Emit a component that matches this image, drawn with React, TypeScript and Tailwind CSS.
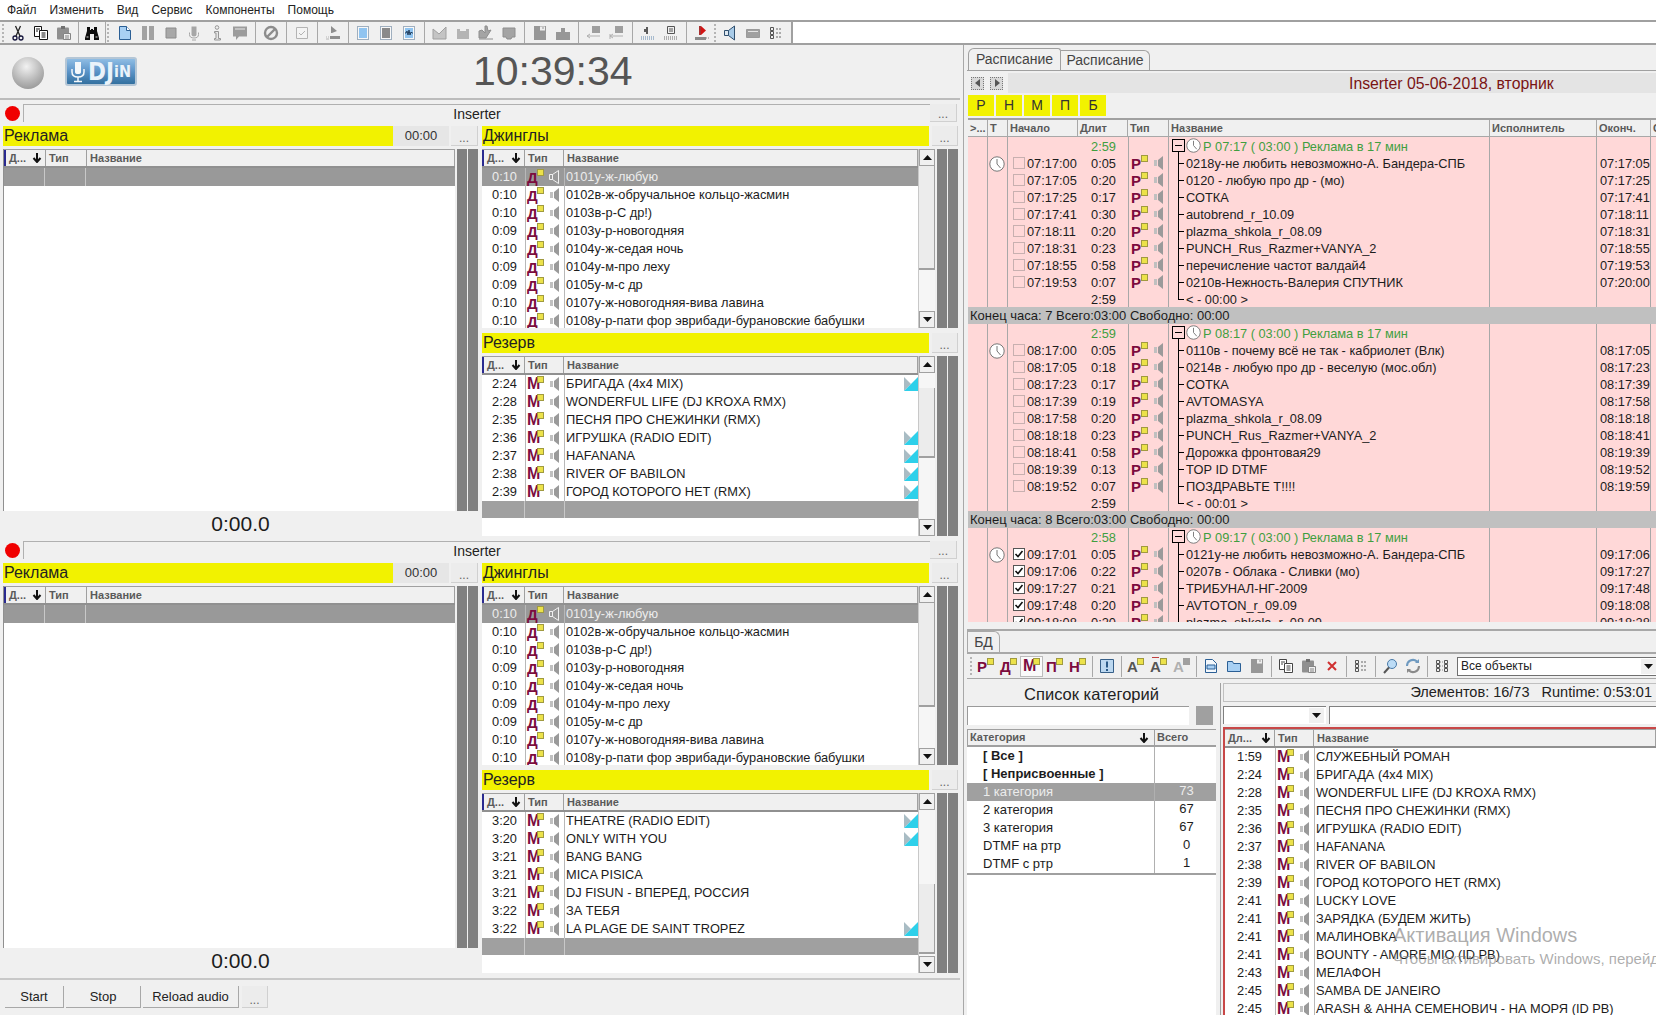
import type { ReactNode } from "react";

type Track = [string, string, boolean?];

const JINGLES: Track[] = [
  ["0:10", "0101у-ж-любую"],
  ["0:10", "0102в-ж-обручальное кольцо-жасмин"],
  ["0:10", "0103в-р-С др!)"],
  ["0:09", "0103у-р-новогодняя"],
  ["0:10", "0104у-ж-седая ночь"],
  ["0:09", "0104у-м-про леху"],
  ["0:09", "0105у-м-с др"],
  ["0:10", "0107у-ж-новогодняя-вива лавина"],
  ["0:10", "0108у-р-пати фор эврибади-бурановские бабушки"],
];

const RESERVE_A: Track[] = [
  ["2:24", "БРИГАДА (4x4 MIX)", true],
  ["2:28", "WONDERFUL LIFE (DJ KROXA RMX)"],
  ["2:35", "ПЕСНЯ ПРО СНЕЖИНКИ (RMX)"],
  ["2:36", "ИГРУШКА (RADIO EDIT)", true],
  ["2:37", "HAFANANA", true],
  ["2:38", "RIVER OF BABILON", true],
  ["2:39", "ГОРОД КОТОРОГО НЕТ (RMX)", true],
];

const RESERVE_B: Track[] = [
  ["3:20", "THEATRE (RADIO EDIT)", true],
  ["3:20", "ONLY WITH YOU", true],
  ["3:21", "BANG BANG"],
  ["3:21", "MICA PISICA"],
  ["3:21", "DJ FISUN - ВПЕРЕД, РОССИЯ"],
  ["3:22", "ЗА ТЕБЯ"],
  ["3:22", "LA PLAGE DE SAINT TROPEZ", true],
];

const DB_TRACKS: Track[] = [
  ["1:59", "СЛУЖЕБНЫЙ РОМАН"],
  ["2:24", "БРИГАДА (4x4 MIX)"],
  ["2:28", "WONDERFUL LIFE (DJ KROXA RMX)"],
  ["2:35", "ПЕСНЯ ПРО СНЕЖИНКИ (RMX)"],
  ["2:36", "ИГРУШКА (RADIO EDIT)"],
  ["2:37", "HAFANANA"],
  ["2:38", "RIVER OF BABILON"],
  ["2:39", "ГОРОД КОТОРОГО НЕТ (RMX)"],
  ["2:41", "LUCKY LOVE"],
  ["2:41", "ЗАРЯДКА (БУДЕМ ЖИТЬ)"],
  ["2:41", "МАЛИНОВКА"],
  ["2:41", "BOUNTY - AMORE MIO (ID PB)"],
  ["2:43", "МЕЛАФОН"],
  ["2:45", "SAMBA DE JANEIRO"],
  ["2:45", "ARASH & АННА СЕМЕНОВИЧ - НА МОРЯ (ID PB)"],
];

const CATEGORIES = [
  { name: "1 категория", total: "73", selected: true },
  { name: "2 категория", total: "67" },
  { name: "3 категория", total: "67" },
  { name: "DTMF на ртр", total: "0" },
  { name: "DTMF с ртр", total: "1" },
];

type Item = [string, string, string, string];

const HOUR_7: Item[] = [
  ["07:17:00", "0:05", "0218у-не любить невозможно-А. Бандера-СПБ", "07:17:05"],
  ["07:17:05", "0:20", "0120 - любую про др -  (мо)", "07:17:25"],
  ["07:17:25", "0:17", "СОТКА", "07:17:41"],
  ["07:17:41", "0:30", "autobrend_r_10.09", "07:18:11"],
  ["07:18:11", "0:20", "plazma_shkola_r_08.09", "07:18:31"],
  ["07:18:31", "0:23", "PUNCH_Rus_Razmer+VANYA_2", "07:18:55"],
  ["07:18:55", "0:58", "перечисление частот валдай4", "07:19:53"],
  ["07:19:53", "0:07", "0210в-Нежность-Валерия СПУТНИК", "07:20:00"],
];

const HOUR_8: Item[] = [
  ["08:17:00", "0:05", "0110в - почему всё не так - кабриолет (Влк)", "08:17:05"],
  ["08:17:05", "0:18", "0214в - любую про др - веселую (мос.обл)", "08:17:23"],
  ["08:17:23", "0:17", "СОТКА", "08:17:39"],
  ["08:17:39", "0:19", "AVTOMASYA", "08:17:58"],
  ["08:17:58", "0:20", "plazma_shkola_r_08.09", "08:18:18"],
  ["08:18:18", "0:23", "PUNCH_Rus_Razmer+VANYA_2", "08:18:41"],
  ["08:18:41", "0:58", "Дорожка фронтовая29", "08:19:39"],
  ["08:19:39", "0:13", "TOP ID DTMF", "08:19:52"],
  ["08:19:52", "0:07", "ПОЗДРАВЬТЕ Т!!!!", "08:19:59"],
];

const HOUR_9: Item[] = [
  ["09:17:01", "0:05", "0121у-не любить невозможно-А. Бандера-СПБ", "09:17:06"],
  ["09:17:06", "0:22", "0207в - Облака - Сливки (мо)", "09:17:27"],
  ["09:17:27", "0:21", "ТРИБУНАЛ-НГ-2009", "09:17:48"],
  ["09:17:48", "0:20", "AVTOTON_r_09.09", "09:18:08"],
  ["09:18:08", "0:20", "plazma_shkola_r_08.09", "09:18:28"],
];

const Ico = ({ children, w = 16 }: { children: ReactNode; w?: number }) => (
  <svg width={w} height={16} viewBox={`0 0 ${w} 16`} className="shrink-0">
    {children}
  </svg>
);

const Cell = ({ children, pressed }: { children?: ReactNode; pressed?: boolean }) => (
  <div
    className={`flex h-[21px] w-[23px] shrink-0 items-center justify-center ${
      pressed ? "border border-[#bcbcbc] bg-[#fafafa]" : ""
    }`}
  >
    {children}
  </div>
);

const Sep = ({ w }: { w: string }) => (
  <div className={`flex h-[21px] shrink-0 justify-center ${w}`}>
    <div className="h-full w-px bg-[#a8a8a8]" />
  </div>
);

const Grip = () => (
  <svg width="3" height="20" viewBox="0 0 3 20" className="shrink-0">
    {[1, 5, 9, 13, 17].map((y) => (
      <rect key={y} x="0" y={y} width="2" height="2" fill="#b5b5b5" />
    ))}
  </svg>
);

const ScissorsIco = () => (
  <Ico>
    <g fill="none" stroke="#14143c" strokeWidth="1.3">
      <circle cx="5" cy="13" r="2" />
      <circle cx="11" cy="13" r="2" />
      <path d="M6 11 10.500 1M10 11 5.500 1" stroke="#222" />
    </g>
  </Ico>
);

const CopyIco = ({ color = "#111" }: { color?: string }) => (
  <Ico>
    <g fill="#fff" stroke={color} strokeWidth="1">
      <path d="M1.500 1.500h7v10h-7z" />
      <path d="M6.500 5.500h8v9h-8z" />
      <path d="M3 4h4M3 6h2M8.500 8h4M8.500 10h4M8.500 12h4" fill="none" />
    </g>
  </Ico>
);

const PasteIco = () => (
  <Ico>
    <path d="M2 2.500h10q1 0 1 1v11H2q-1 0-1-1v-10q0-1 1-1z" fill="#8f8f8f" />
    <path d="M5 1h4v3H5z" fill="#707070" />
    <path d="M7.500 8.500h7v6h-7z" fill="#efefef" stroke="#858585" />
    <path d="M9 11h4M9 13h4" stroke="#858585" />
  </Ico>
);

const BinocIco = () => (
  <Ico>
    <path d="M3 2h3v3h1v-1h2v1h1V2h3v4l2 7v2H10V9H6v6H1v-2l2-7z" fill="#0c0c0c" />
    <path d="M2.500 12h2M11.500 12h2" stroke="#d8d8d8" />
  </Ico>
);

const DocIco = ({ fill = "#a8d0f4" }: { fill?: string }) => (
  <Ico>
    <path d="M2.500 1.500h7l4 4v9h-11z" fill={fill} stroke="#2b5f95" />
    <path d="M9.500 1.500v4h4" fill="#fff" stroke="#2b5f95" />
  </Ico>
);

const PauseIco = () => (
  <Ico>
    <path d="M2 1h5v14H2zM9 1h5v14H9z" fill="#a2a2a2" />
  </Ico>
);

const StopIco = () => (
  <Ico>
    <path d="M3 3h10v10H3z" fill="#a8a8a8" stroke="#8c8c8c" />
  </Ico>
);

const MicIco = () => (
  <Ico>
    <path d="M5.500 1.500h5v8q0 2-2.500 2t-2.500-2z" fill="#a6a6a6" />
    <path d="M3.500 7.500v2q0 3.500 4.500 3.500t4.500-3.500v-2M6 15h4" fill="none" stroke="#a6a6a6" />
  </Ico>
);

const InfoIco = () => (
  <Ico>
    <circle cx="8" cy="2.500" r="1.800" fill="none" stroke="#969696" />
    <path d="M5.500 6.500h4v7h2v1.500h-6v-1.500h1.500v-5.500h-1.500z" fill="#e6e6e6" stroke="#969696" />
  </Ico>
);

const CommentIco = () => (
  <Ico>
    <path d="M1 1.500h14v10H7l-3 3.500v-3.500H1z" fill="#9c9c9c" />
    <path d="M3 3.500h10v1H3z" fill="#e8e8e8" />
  </Ico>
);

const NoIco = () => (
  <Ico>
    <circle cx="8" cy="8" r="6" fill="none" stroke="#8c8c8c" strokeWidth="2.400" />
    <path d="M4 12 12 4" stroke="#8c8c8c" strokeWidth="2.400" />
  </Ico>
);

const CheckIco = () => (
  <Ico>
    <path d="M2.500 2.500h11v11h-11z" fill="#f4f4f4" stroke="#b4b4b4" />
    <path d="M5 8l2 2 4-4" fill="none" stroke="#b4b4b4" />
  </Ico>
);

const FlagIco = () => (
  <Ico>
    <path d="M6 1l6 5-5 2H6z" fill="#8e8e8e" />
    <path d="M5 11h10v3H5z" fill="#8e8e8e" />
    <path d="M1 12h1M3 12h1M1 14h3" stroke="#b4b4b4" />
  </Ico>
);

const DottedIco = ({ fill, wave }: { fill: string; wave?: boolean }) => (
  <Ico>
    <path d="M2.500 1.500h11v13h-11z" fill="#f8f8f8" stroke="#4a6a8a" strokeDasharray="1 1" />
    <path d="M4 3h8v10H4z" fill={fill} />
    {wave && <path d="M4 8h1l1-2 1 4 1-5 1 5 1-3 1 1h1" fill="none" stroke="#23405f" />}
  </Ico>
);

const EnvIco = ({ v }: { v: number }) => (
  <Ico>
    {v === 0 && <path d="M1 4l6 5 7-7v12H1z" fill="#c4c4c4" stroke="#a0a0a0" />}
    {v === 1 && <path d="M2 4h3v2h6V4h3v10H2z" fill="#b4b4b4" />}
    {v === 2 && <path d="M1 6l3-1 3 3V1h2l1 5 3-1-5 8H1zM1 14h14" fill="#a4a4a4" stroke="#8e8e8e" />}
    {v === 3 && <path d="M2 3h12v9h-3l-1 2H6l-1-2H2z" fill="#a4a4a4" stroke="#8e8e8e" />}
  </Ico>
);

const FileGrayIco = () => (
  <Ico>
    <path d="M2 1h12v14H2z" fill="#979797" />
    <path d="M8 1.500h5v4H8z" fill="#eee" />
    <path d="M10 3h2" stroke="#979797" />
  </Ico>
);

const LockIco = () => (
  <Ico>
    <path d="M1 7h5V3h4v4h5v8H1z" fill="#979797" />
  </Ico>
);

const MoveIco = ({ bar }: { bar?: boolean }) => (
  <Ico>
    <path d="M6 1h8v7H6z" fill="#9e9e9e" />
    <path d="M1 11h13M1 11l3-2M1 11l3 2" fill="none" stroke="#b0b0b0" />
    {bar && <path d="M1 9v5" stroke="#b0b0b0" />}
  </Ico>
);

const SmallSpeakerIco = () => (
  <Ico>
    <path d="M6 2h2v7H6zM4 4h2v3H4z" fill="#5a5a5a" />
    <path d="M1 12h14M1 14h14" stroke="#5f86ad" strokeDasharray="1 1" />
  </Ico>
);

const SmallBoxIco = () => (
  <Ico>
    <path d="M4.500 1.500h7v7h-7z" fill="#f0f0f0" stroke="#555" />
    <path d="M6 4h4M6 6h4" stroke="#555" />
    <path d="M1 12h14M1 14h14" stroke="#6a6a6a" strokeDasharray="1 1" />
  </Ico>
);

const RedIco = () => (
  <Ico>
    <path d="M5 1h2v9H5z" fill="#a83030" />
    <path d="M7 1l5 4.500L7 10z" fill="#d21414" />
    <path d="M1 12h11v3H1z" fill="#8a8a8a" />
    <path d="M12 13h3" stroke="#8a8a8a" strokeDasharray="1 1" />
  </Ico>
);

const BlueSpeakerIco = () => (
  <Ico>
    <path d="M2.500 5.500h4v5h-4z" fill="#dfe8f0" stroke="#31506f" />
    <path d="M6.500 5.500l6-4.500v14l-6-4.500z" fill="#a8cbe8" stroke="#31506f" />
  </Ico>
);

const RectIco = () => (
  <Ico>
    <path d="M1.500 4.500h13v8h-13z" fill="#a0a0a0" stroke="#9a9a9a" />
    <path d="M3 6h10v1H3z" fill="#e4e4e4" />
  </Ico>
);

const ListIco = () => (
  <Ico>
    <path d="M2.500 2.500h3v3h-3zM2.500 6.500h3v3h-3zM2.500 10.500h3v3h-3z" fill="none" stroke="#555" />
    <path d="M8 4h6M8 8h6M8 12h6" stroke="#666" strokeDasharray="2 1" />
  </Ico>
);

const DotsGridIco = () => (
  <Ico>
    <path
      d="M2.500 2.500h3v3h-3zM10.500 2.500h3v3h-3zM2.500 6.500h3v3h-3zM10.500 6.500h3v3h-3zM2.500 10.500h3v3h-3zM10.500 10.500h3v3h-3z"
      fill="none"
      stroke="#555"
    />
    <path d="M6 4h4M6 8h4M6 12h4" stroke="#888" strokeDasharray="1 1" />
  </Ico>
);

const InfoBoxIco = () => (
  <Ico>
    <path d="M1.500 1.500h13v13h-13z" fill="#bcd8f0" stroke="#365f88" />
    <path d="M7 3.500h2v6H7zM7 11h2v2H7z" fill="#2a5a88" />
  </Ico>
);

const FormIco = () => (
  <Ico>
    <path d="M2.500 1.500h7l4 4v9h-11z" fill="#f4f8fc" stroke="#2b5f95" />
    <path d="M4 7h8v4H4z" fill="#a8d0f4" stroke="#2b5f95" />
  </Ico>
);

const FolderIco = () => (
  <Ico>
    <path d="M1.500 3.500h5l1 2h7v8h-13z" fill="#a8d0f4" stroke="#2b5f95" />
  </Ico>
);

const CrossIco = () => (
  <Ico>
    <path d="M4 4l8 8M12 4l-8 8" stroke="#d03030" strokeWidth="2" />
  </Ico>
);

const SearchIco = () => (
  <Ico>
    <circle cx="10" cy="6" r="4.500" fill="#bcdcf6" stroke="#4a7aa8" />
    <path d="M7 9.500 2 15" stroke="#555" strokeWidth="2" />
  </Ico>
);

const RefreshIco = () => (
  <Ico>
    <path d="M3 8a5 5 0 0 1 8-4l-1 1h4V1l-1.500 1.500A7 7 0 0 0 1 8z" fill="#6f9ac0" />
    <path d="M13 8a5 5 0 0 1-8 4l1-1H2v4l1.500-1.500A7 7 0 0 0 15 8z" fill="#8a8a8a" />
  </Ico>
);

const ClockIco = ({ size = 16 }: { size?: number }) => (
  <svg width={size} height={size} viewBox="0 0 16 16" className="shrink-0">
    <circle cx="8" cy="8" r="7.200" fill="#fff" stroke="#777" />
    <path d="M8 3v5l3.500 4" fill="none" stroke="#777" />
  </svg>
);

const SpeakerIco = ({ hollow }: { hollow?: boolean }) => (
  <svg width="12" height="14" viewBox="0 0 12 14" className="shrink-0">
    {hollow ? (
      <path d="M.5 4.500h3v5h-3zM3.500 4.500l6-4v13l-6-4z" fill="none" stroke="#f0f0f0" />
    ) : (
      <>
        <path d="M1 4h3v6H1z" fill="#c0c0c0" />
        <path d="M5 4l5-4v14l-5-4z" fill="#9a9a9a" />
      </>
    )}
  </svg>
);

const TypeMark = ({ letter, big }: { letter: string; big?: boolean }) => (
  <span className="relative inline-block h-[16px] w-[17px] shrink-0">
    <span
      className={`absolute bottom-0 left-0 font-bold leading-none text-[#7c0c3e] ${
        big ? "text-[16px]" : "text-[15px]"
      }`}
    >
      {letter}
    </span>
    <span className="absolute right-0 top-0 size-[7px] border border-[#a09a40] bg-[#ece24a]" />
  </span>
);

const Marker = () => (
  <svg width="14" height="14" viewBox="0 0 14 14" className="shrink-0">
    <path d="M0 0 7 7 0 14z" fill="#a9bcc4" />
    <path d="M14 0v14H0z" fill="#2ed0ea" />
  </svg>
);

const SortArrow = () => (
  <svg width="10" height="10" viewBox="0 0 10 10" className="shrink-0">
    <path d="M5 0v8M1.500 5 5 9l3.500-4" fill="none" stroke="#111" strokeWidth="2" />
  </svg>
);

const More = ({ className }: { className: string }) => (
  <div
    className={`flex shrink-0 items-end justify-center border-b border-r border-[#d0d0d0] bg-[#ececec] pb-px text-[12px] leading-[12px] text-[#666] ${className}`}
  >
    ...
  </div>
);

const HeadCell = ({ w, children, first }: { w: string; children?: ReactNode; first?: boolean }) => (
  <div
    className={`flex h-full shrink-0 items-center justify-between overflow-hidden border-r border-[#a0a0a0] pl-[3px] pr-[3px] text-[11px] font-bold text-[#5a5a5a] ${w} ${
      first ? "border-l-2 border-l-[#2a2a90]" : ""
    }`}
  >
    {children}
  </div>
);

const ListHeader = ({ c1, c2, label = "Д..." }: { c1: string; c2: string; label?: string }) => (
  <div className="flex h-[19px] shrink-0 border-b-2 border-t border-b-[#909090] border-t-[#a0a0a0] bg-[#f0f0f0]">
    <HeadCell w={c1} first={label === "Д..."}>
      {label}
      <SortArrow />
    </HeadCell>
    <HeadCell w={c2}>Тип</HeadCell>
    <HeadCell w="flex-1">Название</HeadCell>
  </div>
);

const TrackRow = ({
  track,
  selected,
  letter,
  c1,
  c2,
}: {
  track: Track;
  selected?: boolean;
  letter: string;
  c1: string;
  c2: string;
}) => (
  <div
    className={`flex h-[18px] shrink-0 items-center text-[12.800px] ${
      selected ? "bg-[#999999] text-[#ececec]" : "text-[#1c1c1c]"
    }`}
  >
    <div className={`h-full shrink-0 text-right leading-[18px] ${c1}`}>{track[0]}</div>
    <div className={`flex h-full shrink-0 items-center gap-[5px] border-l border-r border-[#b8b8b8] pl-[1px] ${c2}`}>
      <TypeMark letter={letter} big={letter === "М"} />
      <SpeakerIco hollow={selected} />
    </div>
    <div className="flex h-full min-w-0 flex-1 items-center justify-between pl-[1px]">
      <span className="whitespace-nowrap">{track[1]}</span>
      {track[2] && <Marker />}
    </div>
  </div>
);

const Scrollbar = ({ top, height }: { top: number; height: number }) => (
  <div className="flex h-full w-[17px] shrink-0 flex-col border-l border-[#c8c8c8] bg-[#f6f6f6]">
    <div className="flex h-[17px] shrink-0 items-center justify-center border border-[#a0a0a0] bg-[#f0f0f0]">
      <svg width="9" height="5" viewBox="0 0 9 5">
        <path d="M4.500 0 9 5H0z" fill="#111" />
      </svg>
    </div>
    <div className="min-h-0 flex-1">
      <div style={{ height: top }} />
      <div className="border-b-2 border-r border-[#a0a0a0] bg-[#ececec]" style={{ height }} />
    </div>
    <div className="flex h-[17px] shrink-0 items-center justify-center border border-[#a0a0a0] bg-[#f0f0f0]">
      <svg width="9" height="5" viewBox="0 0 9 5">
        <path d="M4.500 5 9 0H0z" fill="#111" />
      </svg>
    </div>
  </div>
);

const Strips = () => (
  <div className="flex h-full shrink-0 gap-px">
    <div className="h-full w-[10px] bg-[#808080]" />
    <div className="h-full w-[10px] bg-[#808080]" />
  </div>
);

const YellowBar = ({ children, className }: { children: ReactNode; className: string }) => (
  <div className={`h-[20px] bg-[#f2f200] pl-px text-[16px] leading-[20px] text-[#222] ${className}`}>
    {children}
  </div>
);

const TrackList = ({
  tracks,
  letter,
  filler,
  top,
  height,
  selected,
  className,
}: {
  tracks: Track[];
  letter: string;
  filler?: boolean;
  top: number;
  height: number;
  selected?: boolean;
  className: string;
}) => (
  <div className={`flex w-full shrink-0 ${className}`}>
    <div className="flex w-[436px] min-w-0 shrink-0 flex-col overflow-hidden bg-white">
      <ListHeader c1="w-[43px]" c2="w-[39px]" />
      {tracks.map((t, i) => (
        <TrackRow
          key={i}
          track={t}
          letter={letter}
          selected={selected && i === 0}
          c1="w-[43px] pr-[8px]"
          c2="w-[40px]"
        />
      ))}
      {filler && (
        <div className="flex h-[17px] shrink-0 bg-[#a0a0a0]">
          <div className="h-full w-[43px] border-r border-[#c8c8c8]" />
          <div className="h-full w-[40px] border-r border-[#c8c8c8]" />
        </div>
      )}
    </div>
    <Scrollbar top={top} height={height} />
    <div className="w-[2px] shrink-0" />
    <Strips />
  </div>
);

const InserterPanel = ({ reserve, reserveTop }: { reserve: Track[]; reserveTop: number }) => (
  <div className="flex h-[437px] shrink-0 flex-col">
    <div className="flex h-[18px] shrink-0 items-center">
      <div className="ml-[5px] size-[15px] shrink-0 rounded-full bg-[#f00000]" />
      <div className="ml-[3px] flex h-full w-[907px] shrink-0 items-center justify-center border-l border-t border-[#b0b0b0] pt-[2px] text-[14px] text-[#222]">
        Inserter
      </div>
      <More className="h-full w-[27px]" />
    </div>
    <div className="mt-[4px] flex min-h-0 flex-1">
      <div className="ml-[3px] flex w-[475px] shrink-0 flex-col">
        <div className="flex h-[20px] shrink-0">
          <YellowBar className="w-[390px] shrink-0">Реклама</YellowBar>
          <div className="flex h-full w-[56px] shrink-0 items-center justify-center bg-[#e6e6e6] text-[13px] text-[#333]">
            00:00
          </div>
          <More className="ml-[2px] h-full w-[27px]" />
        </div>
        <div className="mt-[3px] flex h-[362px] shrink-0">
          <div className="flex w-[452px] shrink-0 flex-col border-l border-[#909090] bg-white">
            <ListHeader c1="w-[42px]" c2="w-[41px]" />
            <div className="flex h-[18px] shrink-0 bg-[#999999]">
              <div className="h-full w-[41px] border-r border-[#c8c8c8]" />
              <div className="h-full w-[41px] border-r border-[#c8c8c8]" />
            </div>
          </div>
          <div className="w-[2px] shrink-0" />
          <Strips />
        </div>
        <div className="flex h-[26px] shrink-0 items-center justify-center text-[21px] text-[#1c1c1c]">0:00.0</div>
      </div>
      <div className="ml-[4px] flex w-[476px] shrink-0 flex-col">
        <div className="flex h-[20px] shrink-0">
          <YellowBar className="w-[447px] shrink-0">Джинглы</YellowBar>
          <More className="ml-[3px] h-full w-[26px]" />
        </div>
        <TrackList tracks={JINGLES} letter="Д" selected top={0} height={104} className="mt-[3px] h-[179px]" />
        <div className="mt-[5px] flex h-[20px] shrink-0">
          <YellowBar className="w-[447px] shrink-0">Резерв</YellowBar>
          <More className="ml-[3px] h-full w-[26px]" />
        </div>
        <TrackList tracks={reserve} letter="М" filler top={reserveTop} height={70} className="mt-[3px] h-[180px]" />
      </div>
    </div>
  </div>
);

const Logo = () => (
  <div className="ml-[21px] flex h-[29px] w-[72px] shrink-0 items-center rounded-[3px] border-2 border-[#b4c6d6] bg-[linear-gradient(#8fbde4,#5c94c8_50%,#33709f)] pl-[4px]">
    <svg width="14" height="22" viewBox="0 0 14 22" className="shrink-0">
      <path d="M4 1h6v10q0 2-3 2t-3-2z" fill="#f4f8fb" />
      <path d="M1 8v3q0 5 6 5t6-5V8M7 16v4M3 20.500h8" fill="none" stroke="#f4f8fb" strokeWidth="1.500" />
    </svg>
    <span className="ml-[3px] font-['DejaVu_Sans_Condensed','Liberation_Sans',sans-serif] text-[24px] font-bold leading-none text-[#eaf3fa]">
      DJ
    </span>
    <span className="font-['DejaVu_Sans_Condensed','Liberation_Sans',sans-serif] text-[16px] font-bold leading-none text-[#eaf3fa]">
      iN
    </span>
  </div>
);

const TopToolbar = () => (
  <div className="flex h-full w-[793px] shrink-0 items-center border-r-2 border-[#a0a0a0] bg-[#f0f0f0] pl-[2px]">
    <Grip />
    <div className="w-[1.500px] shrink-0" />
    <Cell><ScissorsIco /></Cell>
    <Cell><CopyIco /></Cell>
    <Cell><PasteIco /></Cell>
    <Sep w="w-[5px]" />
    <Cell><BinocIco /></Cell>
    <Sep w="w-[3px]" />
    <Grip />
    <div className="w-[4px] shrink-0" />
    <Cell><DocIco /></Cell>
    <Cell><PauseIco /></Cell>
    <Cell><StopIco /></Cell>
    <Cell><MicIco /></Cell>
    <Cell><InfoIco /></Cell>
    <Cell><CommentIco /></Cell>
    <Sep w="w-[8px]" />
    <Cell><NoIco /></Cell>
    <Sep w="w-[8px]" />
    <Cell><CheckIco /></Cell>
    <Sep w="w-[8px]" />
    <Cell><FlagIco /></Cell>
    <Sep w="w-[7px]" />
    <Cell><DottedIco fill="#90c4f0" /></Cell>
    <Cell><DottedIco fill="#8a8a8a" /></Cell>
    <Cell><DottedIco fill="#90c4f0" wave /></Cell>
    <Sep w="w-[8px]" />
    <Cell><EnvIco v={0} /></Cell>
    <Cell><EnvIco v={1} /></Cell>
    <Cell><EnvIco v={2} /></Cell>
    <Cell><EnvIco v={3} /></Cell>
    <Sep w="w-[8px]" />
    <Cell><FileGrayIco /></Cell>
    <Cell><LockIco /></Cell>
    <Sep w="w-[8px]" />
    <Cell><MoveIco /></Cell>
    <Cell><MoveIco bar /></Cell>
    <Sep w="w-[8px]" />
    <Cell><SmallSpeakerIco /></Cell>
    <Cell><SmallBoxIco /></Cell>
    <Sep w="w-[8px]" />
    <Cell><RedIco /></Cell>
    <Grip />
    <div className="w-[2px] shrink-0" />
    <Cell><BlueSpeakerIco /></Cell>
    <Cell><RectIco /></Cell>
    <Cell><ListIco /></Cell>
  </div>
);

const SCHED = {
  c0: "w-[20px]",
  c1: "w-[20px]",
  c2: "w-[70px]",
  c3: "w-[50px]",
  c4: "w-[41px]",
  c5: "w-[321px]",
  c6: "w-[107px]",
  c7: "w-[54px]",
};

const SchedHead = ({ w, children }: { w: string; children?: ReactNode }) => (
  <div className={`flex h-full shrink-0 items-center overflow-hidden border-r border-[#a8a8a8] pl-[2px] text-[11px] font-bold text-[#5a5a5a] ${w}`}>
    {children}
  </div>
);

const SchedRow = ({
  showClock,
  time,
  checked,
  dur,
  durGreen,
  letter,
  name,
  end,
}: {
  showClock?: boolean;
  time?: string;
  checked?: boolean;
  dur: string;
  durGreen?: boolean;
  letter?: boolean;
  name: ReactNode;
  end?: string;
}) => (
  <div className="flex h-[17px] shrink-0 text-[12.800px] leading-[19px] text-[#1c1c1c]">
    <div className={`h-full shrink-0 border-r border-[#a8a8a8] ${SCHED.c0}`} />
    <div className={`flex h-full shrink-0 items-start justify-center border-r border-[#a8a8a8] pr-px pt-[2px] ${SCHED.c1}`}>
      {showClock && <ClockIco />}
    </div>
    <div className={`flex h-full shrink-0 items-center pl-[5px] pt-px ${SCHED.c2}`}>
      {time && (
        <>
          {checked ? (
            <span className="flex size-[12px] shrink-0 items-center justify-center border border-[#555] bg-white">
              <svg width="10" height="10" viewBox="0 0 10 10">
                <path d="M1.500 5 4 7.500 8.500 2" fill="none" stroke="#111" strokeWidth="1.600" />
              </svg>
            </span>
          ) : (
            <span className="size-[12px] shrink-0 border border-[#c8b0b0] bg-[#ffd8d8]" />
          )}
          <span className="ml-[2px]">{time}</span>
        </>
      )}
    </div>
    <div className={`h-full shrink-0 pr-[12px] text-right ${durGreen ? "text-[#3f9f3f]" : ""} ${SCHED.c3}`}>{dur}</div>
    <div className={`flex h-full shrink-0 items-center gap-[5px] border-l border-r border-[#a8a8a8] pl-[2px] ${SCHED.c4}`}>
      {letter && (
        <>
          <TypeMark letter="Р" />
          <SpeakerIco />
        </>
      )}
    </div>
    <div className={`relative h-full shrink-0 overflow-hidden whitespace-nowrap border-r border-[#a8a8a8] ${SCHED.c5}`}>
      {name}
    </div>
    <div className={`h-full shrink-0 border-r border-[#a8a8a8] ${SCHED.c6}`} />
    <div className={`h-full shrink-0 border-r border-[#a8a8a8] pl-[3px] ${SCHED.c7}`}>{end}</div>
  </div>
);

const TreeName = ({ text, last }: { text: string; last?: boolean }) => (
  <div className="pl-[17px]">
    <span className={`absolute left-[9px] top-0 w-px bg-black ${last ? "h-1/2" : "h-full"}`} />
    <span className="absolute left-[9px] top-1/2 h-px w-[6px] bg-black" />
    {text}
  </div>
);

const GroupTitle = ({ text }: { text: string }) => (
  <div className="flex h-full items-center pl-[3px] text-[#3f9f3f]">
    <span className="relative z-10 flex size-[13px] shrink-0 items-center justify-center border border-black">
      <span className="h-px w-[7px] bg-black" />
    </span>
    <span className="absolute left-[9px] top-[15px] h-[2px] w-px bg-black" />
    <span className="ml-[1px]">
      <ClockIco size={15} />
    </span>
    <span className="ml-[2px] pt-px">{text}</span>
  </div>
);

const ScheduleGroup = ({
  title,
  head,
  tail,
  tailName,
  items,
  checked,
}: {
  title: string;
  head: string;
  tail?: string;
  tailName?: string;
  items: Item[];
  checked?: boolean;
}) => (
  <div className="flex shrink-0 flex-col bg-[#ffd8d8]">
    <SchedRow dur={head} durGreen name={<GroupTitle text={title} />} />
    {items.map((it, i) => (
      <SchedRow
        key={it[0]}
        showClock={i === 0}
        time={it[0]}
        checked={checked}
        dur={it[1]}
        letter
        name={<TreeName text={it[2]} />}
        end={it[3]}
      />
    ))}
    {tail && <SchedRow dur={tail} name={<TreeName text={tailName ?? ""} last />} />}
  </div>
);

const HourEnd = ({ hour }: { hour: number }) => (
  <div className="flex h-[17px] shrink-0 items-center bg-[#c0c0c0] pl-[2px] text-[13px] text-[#1c1c1c]">
    Конец часа: {hour} Всего:03:00 Свободно: 00:00
  </div>
);

const Schedule = () => (
  <div className="flex h-[504px] w-[688px] shrink-0 flex-col overflow-hidden border-t-2 border-[#a0a0a0]">
    <div className="flex h-[17px] shrink-0 border-b border-[#a8a8a8]">
      <SchedHead w={SCHED.c0}>{">..."}</SchedHead>
      <SchedHead w={SCHED.c1}>Т</SchedHead>
      <SchedHead w={SCHED.c2}>Начало</SchedHead>
      <SchedHead w={SCHED.c3}>Длит</SchedHead>
      <SchedHead w={SCHED.c4}>Тип</SchedHead>
      <SchedHead w={SCHED.c5}>Название</SchedHead>
      <SchedHead w={SCHED.c6}>Исполнитель</SchedHead>
      <SchedHead w={SCHED.c7}>Оконч.</SchedHead>
      <SchedHead w="w-[20px]">С</SchedHead>
    </div>
    <ScheduleGroup title="Р 07:17 ( 03:00 ) Реклама в 17 мин" head="2:59" tail="2:59" tailName="< - 00:00 >" items={HOUR_7} />
    <HourEnd hour={7} />
    <ScheduleGroup title="Р 08:17 ( 03:00 ) Реклама в 17 мин" head="2:59" tail="2:59" tailName="< - 00:01 >" items={HOUR_8} />
    <HourEnd hour={8} />
    <ScheduleGroup title="Р 09:17 ( 03:00 ) Реклама в 17 мин" head="2:58" items={HOUR_9} checked />
  </div>
);

const DbToolbar = () => (
  <div className="flex h-[24px] shrink-0 items-center pl-[3px]">
    <Grip />
    <div className="w-[1px] shrink-0" />
    <Cell><TypeMark letter="Р" /></Cell>
    <Cell><TypeMark letter="Д" /></Cell>
    <Cell pressed><TypeMark letter="М" big /></Cell>
    <Cell><TypeMark letter="П" /></Cell>
    <Cell><TypeMark letter="Н" /></Cell>
    <Sep w="w-[6px]" />
    <Cell><InfoBoxIco /></Cell>
    <Sep w="w-[6px]" />
    <Cell>
      <span className="relative inline-block h-[16px] w-[17px]">
        <span className="absolute bottom-0 left-0 text-[15px] font-bold leading-none text-[#555]">А</span>
        <span className="absolute right-0 top-0 size-[7px] border border-[#a09a40] bg-[#ece24a]" />
      </span>
    </Cell>
    <Cell>
      <span className="relative inline-block h-[16px] w-[17px]">
        <span className="absolute bottom-0 left-0 text-[15px] font-bold leading-none text-[#555]">А</span>
        <span className="absolute left-[2px] top-[-1px] h-[3px] w-[7px] border-t border-[#c04040]" />
        <span className="absolute right-0 top-0 size-[7px] border border-[#a09a40] bg-[#ece24a]" />
      </span>
    </Cell>
    <Cell>
      <span className="relative inline-block h-[16px] w-[17px]">
        <span className="absolute bottom-0 left-0 text-[15px] font-bold leading-none text-[#b0b0b0]">А</span>
        <span className="absolute right-0 top-0 size-[7px] bg-[#a0a0a0]" />
      </span>
    </Cell>
    <Sep w="w-[6px]" />
    <Cell><FormIco /></Cell>
    <Cell><FolderIco /></Cell>
    <Cell><FileGrayIco /></Cell>
    <Sep w="w-[6px]" />
    <Cell><CopyIco color="#444" /></Cell>
    <Cell><PasteIco /></Cell>
    <Cell><CrossIco /></Cell>
    <Sep w="w-[6px]" />
    <Cell><ListIco /></Cell>
    <Sep w="w-[6px]" />
    <Cell><SearchIco /></Cell>
    <Cell><RefreshIco /></Cell>
    <Sep w="w-[6px]" />
    <Cell><DotsGridIco /></Cell>
    <div className="ml-[4px] flex h-[19px] w-[201px] shrink-0 items-center justify-between border border-[#707070] bg-white pl-[3px] pr-[1px] text-[12px] text-[#222]">
      Все объекты
      <span className="flex h-[15px] w-[15px] items-center justify-center bg-[#f0f0f0]">
        <svg width="9" height="5" viewBox="0 0 9 5">
          <path d="M4.500 5 9 0H0z" fill="#111" />
        </svg>
      </span>
    </div>
  </div>
);

const Categories = () => (
  <div className="flex w-[249px] shrink-0 flex-col">
    <div className="flex h-[23px] shrink-0 items-center justify-center text-[16.500px] text-[#222]">Список категорий</div>
    <div className="flex h-[19px] shrink-0 items-stretch">
      <div className="w-[222px] shrink-0 border-l border-t border-[#9a9a9a] bg-white" />
      <div className="ml-[7px] w-[17px] shrink-0 bg-[#a0a0a0]" />
    </div>
    <div className="mt-[4px] flex h-[18px] shrink-0 border-b-2 border-t border-[#a0a0a0]">
      <div className="flex w-[188px] shrink-0 items-center justify-between border-l border-r border-[#a0a0a0] pl-[2px] pr-[5px] text-[11px] font-bold text-[#5a5a5a]">
        Категория
        <SortArrow />
      </div>
      <div className="flex flex-1 items-center pl-[2px] text-[11px] font-bold text-[#5a5a5a]">Всего</div>
    </div>
    <div className="flex flex-col bg-white text-[13px] text-[#1c1c1c]">
      <div className="flex h-[18px]">
        <div className="w-[188px] shrink-0 border-r border-[#b0b0b0] pl-[16px] font-bold leading-[18px]">[ Все ]</div>
      </div>
      <div className="flex h-[18px]">
        <div className="w-[188px] shrink-0 border-r border-[#b0b0b0] pl-[16px] font-bold leading-[18px]">[ Неприсвоенные ]</div>
      </div>
      {CATEGORIES.map((c) => (
        <div key={c.name} className={`flex h-[18px] ${c.selected ? "bg-[#a0a0a0] text-[#ececec]" : ""}`}>
          <div className="w-[188px] shrink-0 border-r border-[#b0b0b0] pl-[16px] leading-[18px]">{c.name}</div>
          <div className="flex-1 pl-[2px] text-center leading-[16px]">{c.total}</div>
        </div>
      ))}
    </div>
    <div className="h-[2px] shrink-0 bg-[#a0a0a0]" />
    <div className="flex-1 bg-white" />
  </div>
);

const DbList = () => (
  <div className="flex min-w-0 flex-1 flex-col">
    <div className="flex h-[19px] shrink-0 items-center justify-end whitespace-pre border-b border-l border-t border-[#c0c0c0] pr-[4px] text-[14.500px] text-[#222]">
      {"Элементов: 16/73   Runtime: 0:53:01"}
    </div>
    <div className="mt-[4px] flex h-[18px] shrink-0">
      <div className="flex w-[103px] shrink-0 items-center justify-end border-l border-t border-[#808080] bg-white pr-[2px]">
        <span className="flex h-[15px] w-[15px] items-center justify-center bg-[#f0f0f0]">
          <svg width="9" height="5" viewBox="0 0 9 5">
            <path d="M4.500 5 9 0H0z" fill="#111" />
          </svg>
        </span>
      </div>
      <div className="ml-[3px] flex-1 border-l border-t border-[#808080] bg-white" />
    </div>
    <div className="mt-[3px] flex min-h-0 flex-1 flex-col overflow-hidden border-l-2 border-t-2 border-[#c84848] bg-white">
      <ListHeader c1="w-[50px]" c2="w-[39px]" label="Дл..." />
      {DB_TRACKS.map((t, i) => (
        <TrackRow key={i} track={t} letter="М" c1="w-[50px] pr-[13px]" c2="w-[40px]" />
      ))}
    </div>
  </div>
);

export default function App() {
  return (
    <div className="relative flex h-[1015px] w-[1656px] flex-col overflow-hidden bg-[#f0f0f0] font-['Liberation_Sans',Arial,sans-serif]">
      <div className="flex h-[20px] shrink-0 items-center gap-[13px] bg-white pl-[7px] text-[12px] text-[#222]">
        <span>Файл</span>
        <span>Изменить</span>
        <span>Вид</span>
        <span>Сервис</span>
        <span>Компоненты</span>
        <span>Помощь</span>
      </div>
      <div className="flex h-[25px] shrink-0 items-center border-b-2 border-t-2 border-[#a0a0a0] bg-white">
        <TopToolbar />
      </div>
      <div className="flex min-h-0 flex-1">
        <div className="flex w-[960px] shrink-0 flex-col">
          <div className="flex h-[55px] shrink-0 items-center border-b-2 border-[#bcbcbc]">
            <div className="ml-[12px] mt-[2px] size-[32px] shrink-0 rounded-full bg-[radial-gradient(circle_at_45%_30%,#f2f2f2,#b4b4b4_55%,#868686)]" />
            <Logo />
            <div className="ml-[336px] text-[41px] leading-none text-[#555]">10:39:34</div>
          </div>
          <div className="h-[4px] shrink-0" />
          <InserterPanel reserve={RESERVE_A} reserveTop={15} />
          <InserterPanel reserve={RESERVE_B} reserveTop={74} />
          <div className="h-[2px] shrink-0 bg-[#c8c8c8]" />
          <div className="mt-[6px] flex h-[22px] shrink-0 gap-[2px] pl-[5px] text-[13px] text-[#222]">
            <div className="flex w-[59px] items-center justify-center border-b border-r border-[#a8a8a8] bg-[#f0f0f0]">Start</div>
            <div className="flex w-[75px] items-center justify-center border-b border-r border-[#a8a8a8] bg-[#f0f0f0]">Stop</div>
            <div className="flex w-[96px] items-center justify-center border-b border-r border-[#a8a8a8] bg-[#f0f0f0]">Reload audio</div>
            <More className="ml-[1px] h-full w-[26px]" />
          </div>
        </div>
        <div className="ml-[3px] flex min-w-0 flex-1 flex-col border-l border-[#a8a8a8] pl-[3px]">
          <div className="flex h-[26px] shrink-0 items-end border-b border-[#a0a0a0] pl-px">
            <div className="flex h-[22px] w-[93px] items-center justify-center rounded-tl-[6px] rounded-tr-[3px] border-l border-r border-t border-[#a0a0a0] text-[14px] font-normal text-[#444]">
              Расписание
            </div>
            <div className="flex h-[20px] w-[89px] items-center justify-center rounded-tr-[6px] border-r border-t border-[#a0a0a0] text-[14px] text-[#444]">
              Расписание
            </div>
          </div>
          <div className="mt-[2px] flex h-[20px] shrink-0">
            <div className="flex w-[41px] shrink-0 items-center gap-[6px] pl-[4px]">
              <span className="flex size-[13px] items-center justify-center border border-dotted border-[#777] bg-[#d8d8d8]">
                <svg width="6" height="8" viewBox="0 0 6 8">
                  <path d="M5 0v8L0 4z" fill="#555" />
                </svg>
              </span>
              <span className="flex size-[13px] items-center justify-center border border-dotted border-[#777] bg-[#d8d8d8]">
                <svg width="6" height="8" viewBox="0 0 6 8">
                  <path d="M1 0v8l5-4z" fill="#555" />
                </svg>
              </span>
            </div>
            <div className="flex min-w-0 flex-1 items-center bg-[#e4e4e4] pl-[341px] pt-[2px] text-[15.800px] text-[#7a1414]">
              <span className="whitespace-nowrap">Inserter 05-06-2018, вторник</span>
            </div>
          </div>
          <div className="ml-px mt-[2px] flex h-[21px] shrink-0 gap-[2px] text-[14px] text-[#333]">
            {["Р", "Н", "М", "П", "Б"].map((l) => (
              <div key={l} className="flex h-full w-[26px] items-center justify-center bg-[#f2f200]">
                {l}
              </div>
            ))}
          </div>
          <div className="ml-px mt-[2px]">
            <Schedule />
          </div>
          <div className="mt-[7px] h-[2px] shrink-0 bg-[#a8a8a8]" />
          <div className="flex h-[23px] shrink-0 items-end border-b-2 border-[#a8a8a8]">
            <div className="flex h-[21px] w-[33px] items-center justify-center rounded-tr-[6px] border-l border-r border-t border-[#a8a8a8] text-[14px] text-[#444]">
              БД
            </div>
          </div>
          <DbToolbar />
          <div className="h-px shrink-0 bg-[#a8a8a8]" />
          <div className="flex min-h-0 flex-1 pt-[4px]">
            <Categories />
            <div className="mx-[2px] h-full w-[3px] shrink-0 border-r border-[#a0a0a0]" />
            <DbList />
          </div>
        </div>
      </div>
      <div className="pointer-events-none absolute left-[1393px] top-[922px] whitespace-nowrap text-[#8a8a8a]/70">
        <div className="text-[20px] leading-[26px]">Активация Windows</div>
        <div className="text-[15px] leading-[22px]">Чтобы активировать Windows, перейдите</div>
      </div>
    </div>
  );
}
